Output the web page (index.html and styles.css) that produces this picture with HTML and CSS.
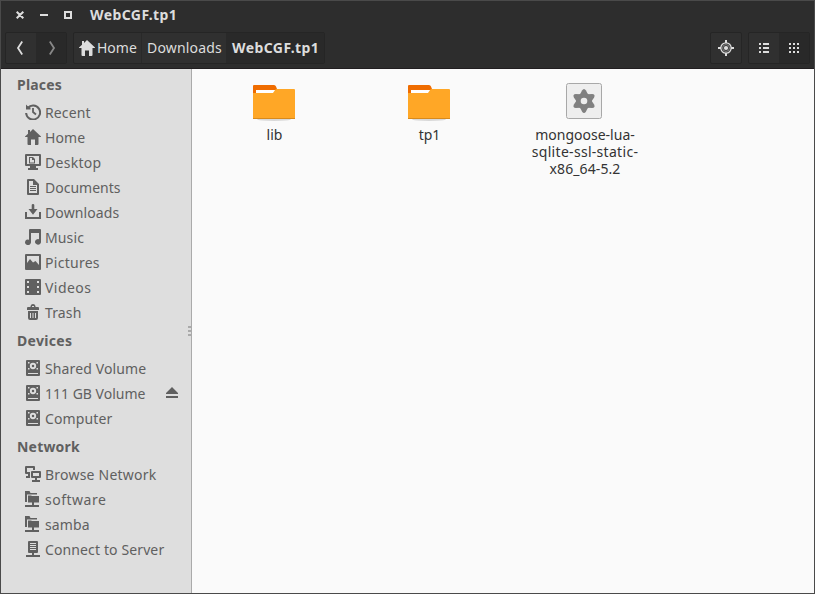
FILE: index.html
```html
<!DOCTYPE html>
<html lang="en">
<head>
<meta charset="utf-8">
<title>WebCGF.tp1</title>
<link rel="stylesheet" href="styles.css">
</head>
<body>
<svg class="defs" width="0" height="0">
  <symbol id="home" viewBox="0 0 16 16"><path d="M8 0 16 7.6V8H13.5V15Q13.5 16 12.5 16H10V10.5H6V16H3.5Q2.5 16 2.5 15V8H0V7.6L3 4.8V1H5V2.9Z"/></symbol>
  <symbol id="disk" viewBox="0 0 16 16"><path fill-rule="evenodd" d="M2 0H14Q15 0 15 1V15Q15 16 14 16H2Q1 16 1 15V1Q1 0 2 0ZM3 13V14H13V13ZM3 2V3.5H4.5V2ZM11.5 2V3.5H13V2ZM3 8V9.5H4.5V8ZM11.5 8V9.5H13V8Z"/><circle cx="8" cy="6" r="2.2" fill="none" stroke="#dedede" stroke-width="1.9"/></symbol>
  <symbol id="share" viewBox="0 0 16 16"><path d="M0 0H4.5L5.5 2H12V3.5H2V11H0ZM3 4.5H6L7 5H14V11.5H9V14H14V16H0V14H7V11.5H3Z"/></symbol>
  <symbol id="folder" viewBox="0 0 44 38"><ellipse cx="22" cy="34.5" rx="17" ry="1.5" fill="#d8d8d8"/><path fill="#ef6c00" d="M2 0H22Q23.5 0 24 1.5L25 4V16H1V1Q1 0 2 0Z"/><path fill="#fff" d="M4 5H24V9H4Z"/><path fill="#ffa726" d="M1 8H21L23.2 4.8Q23.8 4 25 4H42Q43 4 43 5V34H1Z"/><path fill="#d88a1c" d="M1 33H43V34H1Z"/></symbol>
</svg>
<div class="window">
  <header>
    <div class="titlebar">
      <svg class="controls" width="56" height="8" viewBox="0 0 56 8"><path fill="none" stroke="#ddd" stroke-width="2" d="M.7.7 7.3 7.3M7.3.7.7 7.3M24 4H32M49 1H55V7H49Z"/></svg>
      <span class="title">WebCGF.tp1</span>
    </div>
    <div class="toolbar">
      <div class="group nav">
        <span class="cell"><svg width="16" height="16"><path fill="none" stroke="#ddd" stroke-width="1.8" d="M9.2 1.5 5 8l4.2 6.5"/></svg></span>
        <span class="cell off"><svg width="16" height="16"><path fill="none" stroke="#888" stroke-width="1.8" d="M6.8 1.5 11 8l-4.2 6.5"/></svg></span>
      </div>
      <div class="group path">
        <span class="cell p-home"><svg width="16" height="16"><use href="#home"/></svg><span>Home</span></span>
        <span class="cell p-down"><span>Downloads</span></span>
        <span class="cell p-cur off"><span>WebCGF.tp1</span></span>
      </div>
      <div class="group locate"><span class="cell"><svg width="16" height="16"><circle cx="8" cy="8" r="5.2" fill="none" stroke="#ddd" stroke-width="1.3"/><circle cx="8" cy="8" r="3.4" fill="none" stroke="#999" stroke-width=".8"/><circle cx="8" cy="8" r="2.1"/><path d="M7 0H9V3H7ZM7 13H9V16H7ZM0 7H3V9H0ZM13 7H16V9H13Z"/></svg></span></div>
      <div class="group views">
        <span class="cell"><svg width="16" height="16"><path d="M3 3H5V5H3ZM7 3H13V5H7ZM3 7H5V9H3ZM7 7H13V9H7ZM3 11H5V13H3ZM7 11H13V13H7Z"/></svg></span>
        <span class="cell off"><svg width="16" height="16"><path d="M3 3H5V5H3ZM7 3H9V5H7ZM11 3H13V5H11ZM3 7H5V9H3ZM7 7H9V9H7ZM11 7H13V9H11ZM3 11H5V13H3ZM7 11H9V13H7ZM11 11H13V13H11Z"/></svg></span>
      </div>
    </div>
  </header>
  <div class="body">
    <nav class="sidebar">
      <h2 class="places">Places</h2>
      <ul>
        <li class="recent"><svg width="16" height="16"><path fill="none" stroke="#606060" stroke-width="2" d="M2.8 3.9A7 7 0 1 1 1.1 9"/><path d="M1 .5 2.5 2 5.5 3.5V5.5H1Z"/><path fill="none" stroke="#606060" stroke-width="1.8" d="M8 4V8L11 10.5"/></svg><span>Recent</span></li>
        <li class="home"><svg width="16" height="16"><use href="#home"/></svg><span>Home</span></li>
        <li class="desktop"><svg width="16" height="16"><path fill-rule="evenodd" d="M1 0H15Q16 0 16 1V11Q16 12 15 12H11V14H13V16H3V14H5V12H1Q0 12 0 11V1Q0 0 1 0ZM2 2V10H14V2Z"/><path fill-rule="evenodd" d="M4 3H8L10 5V9.5H4ZM5 4V8.5H9V6H7V4Z"/></svg><span>Desktop</span></li>
        <li class="documents"><svg width="16" height="16"><path fill-rule="evenodd" d="M3 0H9L14 5V15Q14 16 13 16H3Q2 16 2 15V1Q2 0 3 0ZM4 2V14H12V6H8V2ZM5 7H11V8H5ZM5 9H11V10H5ZM5 11H11V12H5Z"/></svg><span>Documents</span></li>
        <li class="downloads"><svg width="16" height="16"><path d="M8 0Q9.3 0 9.3 1V5H12.5L8 10.8 3.5 5H6.7V1Q6.7 0 8 0ZM0 8H2V13H14V8H16V15H0Z"/></svg><span>Downloads</span></li>
        <li class="music"><svg width="16" height="16"><path d="M5 0H15Q16 0 16 1V12.5A3 2.8 0 1 1 14 10.2V4H6V13.2A3 2.8 0 1 1 4 10.7V1Q4 0 5 0Z"/></svg><span>Music</span></li>
        <li class="pictures"><svg width="16" height="16"><path fill-rule="evenodd" d="M1 0H15Q16 0 16 1V15Q16 16 15 16H1Q0 16 0 15V1Q0 0 1 0ZM2 2V9L5 5 8 8.5 10.5 7 14 11V2Z"/></svg><span>Pictures</span></li>
        <li class="videos"><svg width="16" height="16"><path fill-rule="evenodd" d="M1 0H15Q16 0 16 1V15Q16 16 15 16H1Q0 16 0 15V1Q0 0 1 0ZM2 2V4H4V2ZM2 7V9H4V7ZM2 12V14H4V12ZM12 2V4H14V2ZM12 7V9H14V7ZM12 12V14H14V12Z"/></svg><span>Videos</span></li>
        <li class="trash"><svg width="16" height="16"><path fill-rule="evenodd" d="M5.5 3V2Q6 0 8 0T10.5 2V3H13Q14 3 14 4V6H2V4Q2 3 3 3ZM7 3H9V2H7ZM3 7H13V14Q13 16 11 16H5Q3 16 3 14ZM5 9V14H6V9ZM7.5 9V14H8.5V9ZM10 9V14H11V9Z"/></svg><span>Trash</span></li>
      </ul>
      <h2 class="devices">Devices</h2>
      <ul>
        <li class="shared"><svg width="16" height="16"><use href="#disk"/></svg><span>Shared Volume</span></li>
        <li class="volume"><svg width="16" height="16"><use href="#disk"/></svg><span>111 GB Volume</span><svg class="eject" width="12" height="12"><path d="M6 0 12 6V7H0V6ZM0 9H12V11H0Z"/></svg></li>
        <li class="computer"><svg width="16" height="16"><use href="#disk"/></svg><span>Computer</span></li>
      </ul>
      <h2 class="network">Network</h2>
      <ul>
        <li class="browse"><svg width="16" height="16"><path d="M1 0H9Q10 0 10 1V4H8V2H2V6H5V8H1Q0 8 0 7V1Q0 0 1 0ZM1 10H5V12H1Z"/><path fill-rule="evenodd" d="M7 5H15Q16 5 16 6V11Q16 12 15 12H12V14H15V16H7V14H10V12H7Q6 12 6 11V6Q6 5 7 5ZM8 7V10H14V7Z"/><path d="M3 8H5V10H3Z"/></svg><span>Browse Network</span></li>
        <li class="software"><svg width="16" height="16"><use href="#share"/></svg><span>software</span></li>
        <li class="samba"><svg width="16" height="16"><use href="#share"/></svg><span>samba</span></li>
        <li class="connect"><svg width="16" height="16"><path fill-rule="evenodd" d="M4 0H12Q13 0 13 1V11Q13 12 12 12H9V14H15V16H1V14H7V12H4Q3 12 3 11V1Q3 0 4 0ZM5 2V3H11V2ZM5 4V5H11V4ZM5 6V7H11V6ZM5 8V9H11V8Z"/></svg><span>Connect to Server</span></li>
      </ul>
      <svg class="grip" width="3" height="10"><path fill="#aaa" d="M0 0H3V2H0ZM0 4H3V6H0ZM0 8H3V10H0Z"/></svg>
    </nav>
    <main>
      <figure><svg width="44" height="38"><use href="#folder"/></svg><figcaption><span class="f-lib">lib</span></figcaption></figure>
      <figure><svg width="44" height="38"><use href="#folder"/></svg><figcaption><span class="f-tp">tp1</span></figcaption></figure>
      <figure class="binary"><svg width="36" height="36" viewBox="0 0 36 36"><rect x=".5" y=".5" width="35" height="35" rx="2" fill="#eee" stroke="#a8a8a8"/><g fill="#808080"><circle cx="18" cy="18" r="8"/><path id="tooth" d="M14 11.5 16 7.5Q18 4.5 20 7.5L22 11.5V24.5L20 28.5Q18 31.5 16 28.5L14 24.5Z"/><use href="#tooth" transform="rotate(60 18 18)"/><use href="#tooth" transform="rotate(120 18 18)"/></g><circle cx="18" cy="18" r="3.3" fill="#eee"/></svg><figcaption><span class="f-a">mongoose-lua-</span><span class="f-b">sqlite-ssl-static-</span><span class="f-c">x86_64-5.2</span></figcaption></figure>
    </main>
  </div>
</div>
</body>
</html>
```

FILE: styles.css
```css
* { box-sizing: border-box; }
body { margin: 0; font: 14px/20px "Noto Sans", sans-serif; overflow: hidden; }
.defs { position: absolute; }
svg { display: block; flex: none; }
.window { width: 815px; height: 594px; border: 1px solid #4a4a4a; display: flex; flex-direction: column; background: #fafafa; }
header { height: 68px; flex: none; background: #2d2d2d; border-bottom: 1px solid #211e20; color: #ddd; fill: #ddd; }
.titlebar { height: 31px; display: flex; align-items: center; padding: 0 0 4px 15px; }
.controls { margin-right: 18px; }
.title, .p-cur { font-weight: 700; letter-spacing: .42px; }
.toolbar { display: flex; padding: 0 4px; }
.group { height: 32px; display: flex; border: 1px solid #252525; border-radius: 2px; background: #303030; }
.cell { display: flex; align-items: center; justify-content: center; flex: 1; white-space: nowrap; }
.cell + .cell { border-left: 1px solid #292929; }
.off { background: #292929; }
.nav { width: 62px; }
.path { width: 252px; margin-left: 6px; }
.path .cell { flex: none; justify-content: flex-start; }
.p-home { width: 67px; padding-left: 5px; gap: 2px; }
.p-down { width: 85px; padding-left: 5px; letter-spacing: .18px; }
.p-cur { width: 98px; padding-left: 5px; }
.locate { width: 32px; margin-left: auto; }
.views { width: 62px; margin-left: 6px; }
.body { flex: 1; display: flex; min-height: 0; }
.sidebar { width: 191px; flex: none; position: relative; background: #dedede; border-right: 1px solid #aaa; color: #606060; fill: #606060; }
h2 { margin: 0; height: 31px; padding: 6px 0 0 16px; font-size: 14px; line-height: 20px; letter-spacing: .2px; }
.devices { letter-spacing: .3px; }
ul { list-style: none; margin: 0; padding: 0; }
li { height: 25px; padding: 4px 13px 0 24px; display: flex; gap: 4px; align-items: flex-start; white-space: nowrap; line-height: 18px; letter-spacing: .12px; }
.desktop, .pictures { letter-spacing: .28px; }
.videos { letter-spacing: .45px; }
.browse { letter-spacing: .22px; }
.software { letter-spacing: .5px; }
.documents, .volume { letter-spacing: 0; }
.eject { margin: 2px 0 0 auto; }
.grip { position: absolute; right: 0; top: 257px; }
main { flex: 1; display: flex; padding: 14px 0 0 4px; color: #333; }
figure { margin: 0; width: 155px; display: flex; flex-direction: column; align-items: center; padding-top: 2px; }
figcaption { margin-top: 3px; padding-left: 2px; line-height: 17px; text-align: center; white-space: nowrap; }
figcaption span { display: block; font-size: 14px; height: 17px; }
.f-b { letter-spacing: .3px; }
.f-c { letter-spacing: .1px; }
.binary { padding-top: 0; }
.binary figcaption { margin-top: 7px; padding-left: 3px; }
```
